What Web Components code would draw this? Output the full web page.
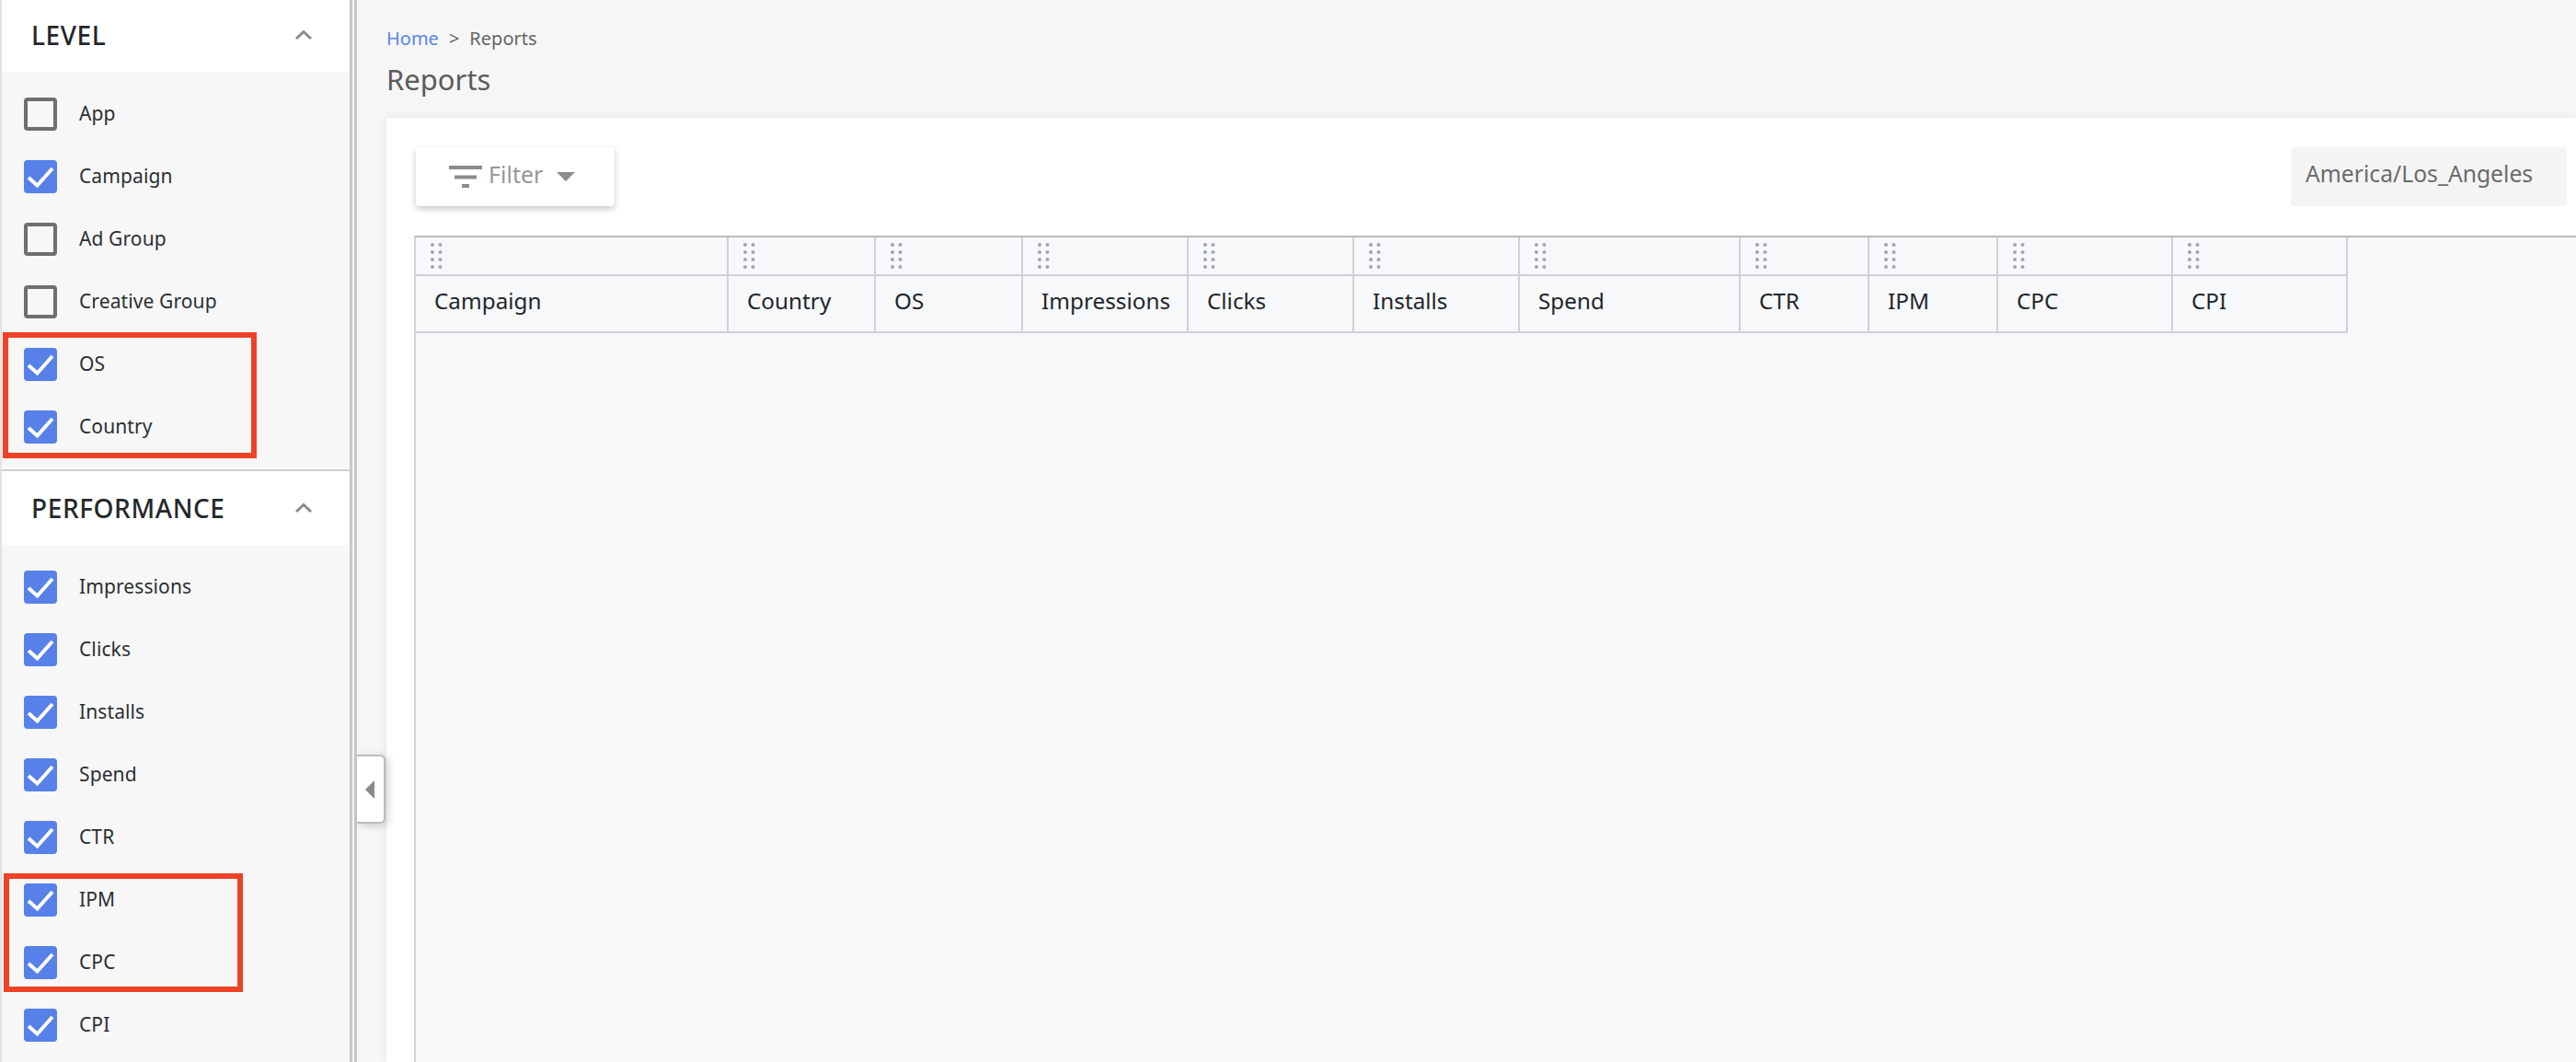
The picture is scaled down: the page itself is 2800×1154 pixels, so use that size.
<!DOCTYPE html>
<html lang="en">
<head>
<meta charset="utf-8">
<title>Reports</title>
<style>
html,body{margin:0;padding:0;height:100%;overflow:hidden;background:#f6f6f6;font-family:"Noto Sans",sans-serif;}
</style>
</head>
<body>
<x-app>
  <x-sidebar slot="side">
    <x-section title="LEVEL">
      <x-check label="App"></x-check>
      <x-check label="Campaign" checked></x-check>
      <x-check label="Ad Group"></x-check>
      <x-check label="Creative Group"></x-check>
      <x-check label="OS" checked></x-check>
      <x-check label="Country" checked></x-check>
    </x-section>
    <x-section title="PERFORMANCE" divided>
      <x-check label="Impressions" checked></x-check>
      <x-check label="Clicks" checked></x-check>
      <x-check label="Installs" checked></x-check>
      <x-check label="Spend" checked></x-check>
      <x-check label="CTR" checked></x-check>
      <x-check label="IPM" checked></x-check>
      <x-check label="CPC" checked></x-check>
      <x-check label="CPI" checked></x-check>
    </x-section>
  </x-sidebar>
  <x-main slot="main">
    <x-breadcrumb home="Home" current="Reports"></x-breadcrumb>
    <x-title>Reports</x-title>
    <x-card>
      <x-toolbar>
        <x-filter-button>Filter</x-filter-button>
        <x-timezone>America/Los_Angeles</x-timezone>
      </x-toolbar>
      <x-table></x-table>
    </x-card>
  </x-main>
</x-app>
<script>
const F='"Noto Sans",sans-serif';
function def(name, css, html){
  customElements.define(name, class extends HTMLElement{
    constructor(){super();this.attachShadow({mode:'open'});}
    connectedCallback(){
      const h = typeof html==='function'?html(this):html;
      this.shadowRoot.innerHTML='<style>'+css+'</style>'+h;
    }
  });
}
def('x-app',`
:host{display:flex;width:2800px;height:1154px;overflow:hidden;position:relative;}
.mark{position:absolute;box-sizing:border-box;border:6px solid #ee4227;z-index:5;pointer-events:none;}
.m1{left:3px;top:361px;width:276px;height:137px;}
.m2{left:4px;top:949px;width:260px;height:129px;}
.split{flex:none;width:8px;box-sizing:border-box;border-left:3px solid #c9c9c9;border-right:3px solid #c9c9c9;background:#f4f4f4;}
.handle{position:absolute;z-index:4;left:388px;top:820px;width:31px;height:75px;box-sizing:border-box;background:#fff;border:2px solid #bdbdbd;border-left:0;border-radius:0 6px 6px 0;box-shadow:3px 2px 8px rgba(0,0,0,.18);display:flex;align-items:center;justify-content:center;}
.handle svg{display:block;margin-left:-1px;}
`,`<slot name="side"></slot><div class="split"></div><slot name="main"></slot>
<div class="mark m1"></div><div class="mark m2"></div>
<div class="handle"><svg width="10" height="20" viewBox="0 0 10 20"><path d="M10 0V20L0 10Z" fill="#8a8a8a"/></svg></div>`);

def('x-sidebar',`
:host{display:block;flex:none;width:380px;box-sizing:border-box;border-left:2px solid #e2e2e2;height:1154px;overflow:hidden;background:#f7f7f7;}
`,`<slot></slot>`);

def('x-section',`
:host{display:block;}
:host([divided]){border-top:2px solid #cfcfcf;}
header{display:flex;align-items:center;justify-content:space-between;height:78px;background:#fff;padding:0 40px 2px 32px;box-sizing:border-box;}
:host([divided]) header{height:80px;padding-bottom:0;}
h2{margin:0;font:500 28px/1 ${F};color:#24272b;letter-spacing:.6px;}
svg{display:block;}
.list{padding:12px 0;display:flex;flex-direction:column;}
`,el=>`<header><h2>${el.getAttribute('title')}</h2><svg width="20" height="12" viewBox="0 0 20 12"><path d="M2 10L10 2.5L18 10" fill="none" stroke="#8a8a8a" stroke-width="3"/></svg></header><div class="list"><slot></slot></div>`);

def('x-check',`
:host{display:flex;align-items:center;height:68px;padding-left:24px;color:#2b2f33;font:400 21px/1 ${F};letter-spacing:.1px;}
.box{flex:none;width:36px;height:36px;box-sizing:border-box;border-radius:4px;border:4px solid #6f6f6f;margin-right:24px;}
.box.on{background:#5781e8;border:0;}
svg{display:block;}
span{margin-top:-2px;}
`,el=>{
  const on=el.hasAttribute('checked');
  return `<div class="box ${on?'on':''}">${on?'<svg width="36" height="36" viewBox="0 0 36 36"><path d="M5 19L14.500 27.500L31 9" fill="none" stroke="#fff" stroke-width="4"/></svg>':''}</div><span>${el.getAttribute('label')}</span>`;
});

def('x-main',`
:host{display:flex;flex-direction:column;flex:1;min-width:0;padding-left:32px;height:1154px;overflow:hidden;box-sizing:border-box;}
`,`<slot></slot>`);

def('x-breadcrumb',`
:host{display:flex;align-items:center;height:28px;margin-top:28px;font:400 20px/28px ${F};color:#666;}
a{color:#5b85ec;text-decoration:none;}
i{font-style:normal;margin:0 11px;}
`,el=>`<a>${el.getAttribute('home')}</a><i>&gt;</i><span>${el.getAttribute('current')}</span>`);

def('x-title',`
:host{display:block;height:44px;margin-top:8px;margin-bottom:20px;font:400 31px/44px ${F};color:#5b5b5b;}
`,`<slot></slot>`);

def('x-card',`
:host{display:block;flex:1;background:#fff;box-shadow:0 0 8px rgba(0,0,0,.08);padding:32px 0 0 30px;min-height:0;}
`,`<slot></slot>`);

def('x-toolbar',`
:host{display:flex;justify-content:space-between;align-items:flex-start;height:64px;margin-bottom:32px;padding-left:2px;padding-right:10px;}
`,`<slot></slot>`);

def('x-filter-button',`
:host{display:flex;align-items:center;width:216px;height:64px;box-sizing:border-box;padding-left:36px;background:#fff;border-radius:4px;box-shadow:0 3px 7px rgba(0,0,0,.22);color:#979797;font:400 25px/1 ${F};}
svg{display:block;flex:none;}
span{margin:0 15px 6px 7px;}
`,`<svg width="36" height="24" viewBox="0 0 36 24"><path d="M0 0H36V4H0ZM6 10.500H30V14.500H6ZM14 20H22V24H14Z" fill="#8c8c8c"/></svg><span><slot></slot></span><svg width="20" height="10" viewBox="0 0 20 10"><path d="M0 0H20L10 10Z" fill="#8c8c8c"/></svg>`);

def('x-timezone',`
:host{display:flex;align-items:center;width:300px;height:64px;box-sizing:border-box;padding:0 0 6px 16px;background:#f4f4f4;border-radius:4px;color:#6b6b6b;font:400 24.700px/1 ${F};}
`,`<slot></slot>`);

const cols=[['Campaign',340],['Country',160],['OS',160],['Impressions',180],['Clicks',180],['Installs',180],['Spend',240],['CTR',140],['IPM',140],['CPC',190],['CPI',190]];
const dots=`<svg width="14" height="28" viewBox="0 0 14 28" fill="#9fa7b3">${[2,10,18,26].map(y=>`<circle cx="2" cy="${y}" r="2"/><circle cx="10.500" cy="${y}" r="2"/>`).join('')}</svg>`;
def('x-table',`
:host{display:block;height:100%;box-sizing:border-box;background:#f7f8fa;border-top:2px solid #bcbcbc;border-left:2px solid #d2d3d6;font:400 24.300px/1 ${F};color:#22262b;}
.grid{display:grid;width:max-content;grid-template-rows:42px 62px;grid-template-columns:${cols.map(c=>c[1]+'px').join(' ')};}
.c{box-sizing:border-box;border-right:2px solid #d0d1d4;border-bottom:2px solid #d0d1d4;}
.d{padding:6px 0 0 16px;}
.d svg{display:block;}
.h{display:flex;align-items:center;padding:0 0 6px 20px;}
`,`<div class="grid" role="table">${cols.map(c=>`<div class="c d">${dots}</div>`).join('')}${cols.map(c=>`<div class="c h">${c[0]}</div>`).join('')}</div>`);
</script>
</body>
</html>
